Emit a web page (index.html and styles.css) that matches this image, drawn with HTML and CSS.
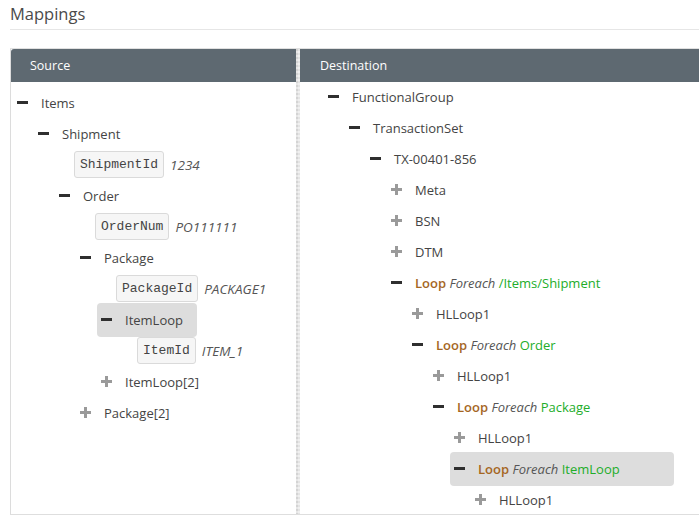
FILE: index.html
```html
<!DOCTYPE html>
<html>
<head>
<meta charset="utf-8">
<title>Mappings</title>
<link rel="stylesheet" href="styles.css">
</head>
<body>
<div class="page">
  <h1 class="title">Mappings</h1>
  <div class="rule"></div>
  <div class="panels">
    <section class="pane pane-source">
      <div class="pane-head">Source</div>
      <ul class="tree tree-source">
        <li><span class="node"><i class="ico minus"></i>Items</span>
          <ul>
            <li><span class="node"><i class="ico minus"></i>Shipment</span>
              <ul>
                <li class="leaf"><span class="key">ShipmentId</span><span class="val">1234</span></li>
                <li><span class="node"><i class="ico minus"></i>Order</span>
                  <ul>
                    <li class="leaf"><span class="key">OrderNum</span><span class="val">PO111111</span></li>
                    <li><span class="node"><i class="ico minus"></i>Package</span>
                      <ul>
                        <li class="leaf"><span class="key">PackageId</span><span class="val">PACKAGE1</span></li>
                        <li><span class="node selected"><i class="ico minus"></i>ItemLoop</span>
                          <ul>
                            <li class="leaf"><span class="key">ItemId</span><span class="val">ITEM_1</span></li>
                          </ul>
                        </li>
                        <li><span class="node"><i class="ico plus"></i>ItemLoop[2]</span></li>
                      </ul>
                    </li>
                    <li><span class="node"><i class="ico plus"></i>Package[2]</span></li>
                  </ul>
                </li>
              </ul>
            </li>
          </ul>
        </li>
      </ul>
    </section>
    <div class="splitter"></div>
    <section class="pane pane-dest">
      <div class="pane-head">Destination</div>
      <ul class="tree tree-dest">
        <li><span class="node"><i class="ico minus"></i>FunctionalGroup</span>
          <ul>
            <li><span class="node"><i class="ico minus"></i>TransactionSet</span>
              <ul>
                <li><span class="node"><i class="ico minus"></i>TX-00401-856</span>
                  <ul>
                    <li><span class="node"><i class="ico plus"></i>Meta</span></li>
                    <li><span class="node"><i class="ico plus"></i>BSN</span></li>
                    <li><span class="node"><i class="ico plus"></i>DTM</span></li>
                    <li><span class="node"><i class="ico minus"></i><b class="loop">Loop</b>&nbsp;<em class="each">Foreach</em>&nbsp;<span class="path">/Items/Shipment</span></span>
                      <ul>
                        <li><span class="node"><i class="ico plus"></i>HLLoop1</span></li>
                        <li><span class="node"><i class="ico minus"></i><b class="loop">Loop</b>&nbsp;<em class="each">Foreach</em>&nbsp;<span class="path">Order</span></span>
                          <ul>
                            <li><span class="node"><i class="ico plus"></i>HLLoop1</span></li>
                            <li><span class="node"><i class="ico minus"></i><b class="loop">Loop</b>&nbsp;<em class="each">Foreach</em>&nbsp;<span class="path">Package</span></span>
                              <ul>
                                <li><span class="node"><i class="ico plus"></i>HLLoop1</span></li>
                                <li><span class="node selected wide"><i class="ico minus"></i><b class="loop">Loop</b>&nbsp;<em class="each">Foreach</em>&nbsp;<span class="path">ItemLoop</span></span>
                                  <ul>
                                    <li><span class="node"><i class="ico plus"></i>HLLoop1</span></li>
                                  </ul>
                                </li>
                              </ul>
                            </li>
                          </ul>
                        </li>
                      </ul>
                    </li>
                  </ul>
                </li>
              </ul>
            </li>
          </ul>
        </li>
      </ul>
    </section>
  </div>
</div>
</body>
</html>
```

FILE: styles.css
```css
* { box-sizing: border-box; }

html, body {
  margin: 0;
  height: 100%;
  overflow: hidden;
  background: #fff;
}

body {
  font-family: "Open Sans", "Noto Sans", "Liberation Sans", sans-serif;
  font-size: 13px;
  color: #444;
}

.page {
  padding-left: 10px;
}

.title {
  margin: 0;
  padding-top: 3px;
  height: 24px;
  line-height: 22px;
  font-size: 16.5px;
  font-weight: 500;
  color: #4a4a4a;
}

.rule {
  margin-top: 5px;
  border-top: 1px solid #e6e6e6;
}

.panels {
  margin-top: 18px;
  height: 467px;
  display: grid;
  grid-template-columns: 286px 4px 1fr;
  border-top: 1px solid #e0e0e0;
  border-bottom: 1px solid #dedede;
  overflow: hidden;
}

.pane {
  overflow: hidden;
  min-width: 0;
}

.pane-source {
  border-left: 1px solid #dcdcdc;
}

.pane-head {
  height: 33px;
  line-height: 33px;
  padding-left: 19px;
  background: #5e6971;
  color: #fff;
  font-size: 12.5px;
}

.pane-source .pane-head {
  border-top-left-radius: 3px;
}

.pane-dest .pane-head {
  padding-left: 20px;
}

.splitter {
  background:
    repeating-linear-gradient(to bottom, rgba(255,255,255,0) 0 2px, rgba(255,255,255,0.45) 2px 4px),
    repeating-linear-gradient(to right, #d4d4d4 0 2px, #e4e4e4 2px 4px);
}

.tree, .tree ul {
  list-style: none;
  margin: 0;
  padding: 0;
}

.tree ul {
  padding-left: 21px;
}

.tree-source {
  padding-top: 5px;
  padding-left: 2px;
}

.tree-dest {
  margin-top: -1px;
  padding-left: 24px;
}

.node {
  display: flex;
  align-items: center;
  width: max-content;
  height: 31px;
  padding: 0 4px;
  white-space: nowrap;
  border-radius: 4px;
}

.node.selected {
  background: #dddddd;
  height: 34px;
  margin: -1.5px 0;
  padding-right: 14px;
}

.node.selected.wide {
  width: 224px;
}

.ico {
  position: relative;
  flex: none;
  width: 11px;
  height: 11px;
  margin-right: 13px;
}

.ico::before,
.ico::after {
  content: "";
  position: absolute;
}

.ico.minus::before {
  left: 0;
  top: 4px;
  width: 11px;
  height: 3px;
  background: #2f2f2f;
}

.ico.plus::before {
  left: 0;
  top: 4px;
  width: 11px;
  height: 3px;
  background: #9a9a9a;
}

.ico.plus::after {
  left: 4px;
  top: 0;
  width: 3px;
  height: 11px;
  background: #9a9a9a;
}

.leaf {
  display: flex;
  align-items: center;
  height: 31px;
  padding-left: 19px;
}

.key {
  display: inline-flex;
  align-items: center;
  height: 27px;
  padding: 0 5px;
  border: 1px solid #dadada;
  border-radius: 3px;
  background: #f6f6f6;
  font-family: "Liberation Mono", "DejaVu Sans Mono", monospace;
  font-size: 13px;
  color: #444;
}

.val {
  margin-left: 6px;
  font-style: italic;
  font-size: 13.5px;
  color: #555;
}

.loop {
  font-weight: 600;
  color: #a5661f;
}

.each {
  font-style: italic;
  color: #555;
}

.path {
  color: #22ad2a;
}
```
